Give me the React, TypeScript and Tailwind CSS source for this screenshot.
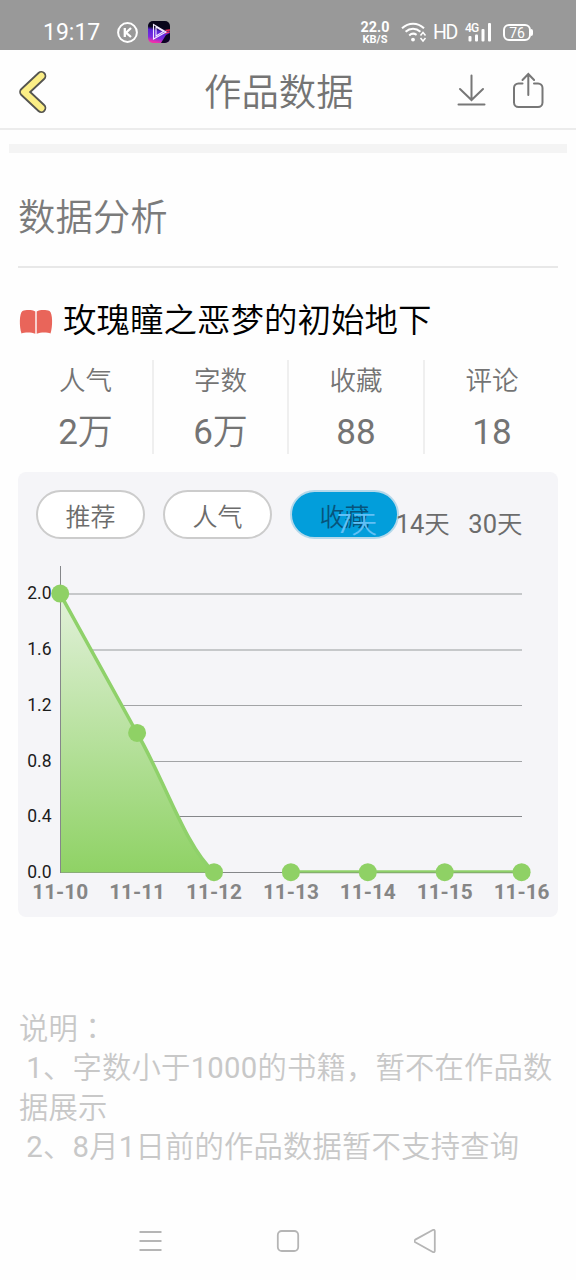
import type { ReactNode } from "react"

const stats = [
    { label: "人气", value: "2万" },
    { label: "字数", value: "6万" },
    { label: "收藏", value: "88" },
    { label: "评论", value: "18" },
]

const points = [
    { day: "11-10", value: 2 },
    { day: "11-11", value: 1 },
    { day: "11-12", value: 0 },
    { day: "11-13", value: 0 },
    { day: "11-14", value: 0 },
    { day: "11-15", value: 0 },
    { day: "11-16", value: 0 },
]

// y is relative to the chart svg
const gridLines = [
    { label: "2.0", y: 44, color: "#c6c8ca", width: 2 },
    { label: "1.6", y: 100, color: "#c6c8ca", width: 2 },
    { label: "1.2", y: 155.5, color: "#a2a4a6", width: 1 },
    { label: "0.8", y: 211.5, color: "#a2a4a6", width: 1 },
    { label: "0.4", y: 266.5, color: "#85878a", width: 1 },
    { label: "0.0", y: 322.5, color: "#85878a", width: 1 },
]

// digits stay at normal weight, the Chinese text around them is lighter
function Mixed({ text }: { text: string }) {
    return (
        <>
            {text.split(/(\d+)/).map((part, i) =>
                i % 2 ? (
                    <span key={i} className="font-normal">
                        {part}
                    </span>
                ) : (
                    part
                )
            )}
        </>
    )
}

function StatusBar() {
    return (
        <div className="flex h-[50px] items-start bg-[#999999] text-white">
            <div className="ml-[43px] mt-[18px] w-[74px] text-[23px] leading-[30px]">19:17</div>
            <svg className="mt-[22px] h-[22px] w-[22px]" viewBox="0 0 22 22" fill="none" stroke="white">
                <circle cx="10.5" cy="10.5" r="9.4" strokeWidth="2" />
                <path d="M7.8 6v9M14 6l-5 4.7 5 4.3" strokeWidth="2.3" />
            </svg>
            <svg className="ml-[9px] mt-[21px] h-[22px] w-[22px]" viewBox="0 0 22 22">
                <defs>
                    <linearGradient id="app" x1="0.2" y1="0" x2="0" y2="1">
                        <stop offset="0.25" stopColor="#08051a" />
                        <stop offset="0.4" stopColor="#5a24d8" />
                        <stop offset="0.7" stopColor="#7a2be0" />
                        <stop offset="0.9" stopColor="#f030ac" />
                    </linearGradient>
                </defs>
                <rect width="22" height="22" rx="5" fill="url(#app)" />
                <path d="M18 14l4-2v5a5 5 0 0 1-5 5h-4z" fill="#0c0524" />
                <path d="M17.500 9.500l4.500-.5M17 12l4.500-1" stroke="#f0305f" strokeWidth="1.600" />
                <path d="M5.500 3.500v14.500l12.500-7zM8 6v9l7.500-4.500z" fill="none" stroke="#f2eaff" strokeWidth="1.1" />
            </svg>
            <div className="ml-[190px] mt-[21px] w-[30px] text-center font-bold">
                <div className="h-[13px] text-[14.3px] leading-[13px]">22.0</div>
                <div className="h-[11px] text-[11px] leading-[12px]">KB/S</div>
            </div>
            <svg className="ml-[11px] mt-[22px] h-[22px] w-[26px]" viewBox="0 0 26 22" fill="none" stroke="white" strokeWidth="2">
                <path d="M1 6.200c6.600-6 15.600-6 22 0M4.600 9.800c4.400-4 10.400-4 14.800 0M8.200 13.400c2.200-2 5-2.200 7.400-.6" />
                <circle cx="12" cy="17.600" r="1.900" fill="white" stroke="none" />
                <path d="M19.500 13.500l2.500-3 2.500 3M19.500 16l2.500 3 2.500-3" strokeWidth="1.500" />
            </svg>
            <div className="ml-[6px] mt-[22px] w-[32px] text-[19.5px] leading-[22px] tracking-[-1.5px]">HD</div>
            <div className="relative h-[50px] w-[30px]">
                <span className="absolute left-0 top-[22px] text-[12px] font-medium leading-[12px] tracking-[-0.7px]">4G</span>
                <svg className="mt-[22px] h-[20px] w-[30px]" viewBox="0 0 30 20" fill="white">
                    <rect x="3.500" y="14" width="3" height="5.500" rx="1" />
                    <rect x="10" y="12.500" width="3" height="7" rx="1" />
                    <rect x="16.500" y="7" width="3" height="12.500" rx="1" />
                    <rect x="23" y="1" width="3" height="18.500" rx="1" />
                </svg>
            </div>
            <div className="ml-[8px] mt-[24px] h-[17px] w-[28px] rounded-[6px] border-2 border-white text-center text-[14px] leading-[14px]">
                76
            </div>
            <div className="mt-[29px] h-[7px] w-[2px] rounded-r bg-white" />
        </div>
    )
}

function Header() {
    return (
        <div className="flex h-[80px] items-center border-b-2 border-[#ececec]">
            <svg className="ml-[17px] mt-[5px] h-[46px] w-[34px]" viewBox="0 0 34 46" fill="none" strokeLinecap="round" strokeLinejoin="round">
                <path d="M24.300 7L7.200 23 24.300 39" stroke="#555550" strokeWidth="10" />
                <path d="M24.300 7L7.200 23 24.300 39" stroke="#fbee86" strokeWidth="6.400" />
            </svg>
            <h1 className="ml-[153px] mt-[8px] w-[152px] text-[37.4px] font-[350] leading-[54px] text-[#747474]">作品数据</h1>
            <svg className="ml-[101px] mt-[3px] h-[36px] w-[30px]" viewBox="0 0 30 36" fill="none" stroke="#777777" strokeWidth="2" strokeLinecap="round">
                <path d="M14.500 2.500v24M3 16l11.500 11L26 16M1.500 31.500h26" />
            </svg>
            <svg className="ml-[25px] mt-[3px] h-[40px] w-[32px]" viewBox="0 0 32 40" fill="none" stroke="#777777" strokeWidth="2" strokeLinecap="round">
                <path d="M10.500 12.500H6.500a4.500 4.500 0 0 0-4.500 4.500v14.500a4.500 4.500 0 0 0 4.500 4.500h19.500a4.500 4.500 0 0 0 4.500-4.500V17a4.500 4.500 0 0 0-4.500-4.500H22M16.300 24V3.500M10.500 9l5.800-6 5.800 6" />
            </svg>
        </div>
    )
}

function Pill({ children, active }: { children: ReactNode; active?: boolean }) {
    return (
        <div
            className={
                active
                    ? "flex h-[49px] w-[109px] items-center justify-center rounded-full border-2 border-[#b5d8ea] bg-[#029edb] pt-[6px] text-[25px] font-[350] text-[#07547b]"
                    : "flex h-[49px] w-[109px] items-center justify-center rounded-full border-2 border-[#cccccc] bg-white pt-[6px] text-[25px] font-[350] text-[#6c6c6c]"
            }
        >
            {children}
        </div>
    )
}

function TrendChart() {
    const x = (i: number) => 42.2 + i * 76.9
    const y = (v: number) => 322.2 - v * 139.3

    return (
        <svg className="block h-[367px] w-[540px]" viewBox="0 0 540 367">
            <defs>
                <linearGradient id="area" x1="0" y1="0" x2="0" y2="1">
                    <stop offset="0" stopColor="#e2f1da" />
                    <stop offset="1" stopColor="#8fd265" />
                </linearGradient>
            </defs>
            {gridLines.map((line) => (
                <g key={line.label}>
                    <path d={`M42 ${line.y}H504`} stroke={line.color} strokeWidth={line.width} />
                    <text x="33.5" y={line.y + 5} textAnchor="end" fontSize="17.5" fill="#1c1c1c">
                        {line.label}
                    </text>
                </g>
            ))}
            <path d="M42 43.700L119 183C146 229 168 298 196 322.500H42Z" fill="url(#area)" />
            <path d="M42.500 16V323" stroke="#85878a" />
            <path d="M42 43.700L119 183C146 229 168 298 196 322" fill="none" stroke="#8fd16a" strokeWidth="3.500" />
            <path d="M273 321.500H504" stroke="#8fd16a" strokeWidth="2.500" />
            <path d="M273 322.800H504" stroke="#7da56a" strokeWidth="0.8" />
            {points.map((p, i) => (
                <g key={p.day}>
                    <circle cx={x(i)} cy={y(p.value)} r="9" fill="#8fd165" />
                    <text x={x(i)} y="349" textAnchor="middle" fontSize="20.8" fontWeight="700" fill="#868686">
                        {p.day}
                    </text>
                </g>
            ))}
        </svg>
    )
}

export default function App() {
    return (
        <div className="flex h-[1280px] w-[576px] flex-col overflow-hidden bg-[#fefefe] font-['Roboto','Noto_Sans_CJK_SC',sans-serif]">
            <StatusBar />
            <Header />
            <div className="mx-[9px] mt-[14px] h-[9px] shrink-0 bg-[#f4f4f4]" />

            <main className="mx-[18px] flex flex-col">
                <h2 className="mt-[37px] h-[76px] text-[37.4px] font-[350] leading-[56px] text-[#7b7b7b]">数据分析</h2>
                <div className="h-[2px] bg-[#e8e8e8]" />

                <div className="mt-[31px] flex h-[44px] items-center">
                    <svg className="ml-[1px] mt-[2px] h-[26px] w-[34px]" viewBox="0 0 34 26" fill="#e9655a">
                        <path d="M16.300 2.500C13 .6 7 .6 3.500 2C.2 4 .2 18 2.500 24.500c3-1.500 10-1.500 13.800.2zM17.700 2.500C21 .6 27 .6 30.500 2c3.300 2 3.300 16 1 22.500-3-1.500-10-1.500-13.800.2z" />
                    </svg>
                    <h3 className="ml-[10px] whitespace-nowrap text-[33.5px] font-[350] leading-[44px] text-black">玫瑰瞳之恶梦的初始地下</h3>
                </div>

                <div className="ml-px mt-[17px] grid h-[94px] grid-cols-[135px_135px_136px_134px] text-center text-[#747474]">
                    {stats.map((s) => (
                        <div key={s.label} className="border-r-2 border-[#efefef] last:border-0">
                            <div className="pt-[2px] text-[26.5px] font-[350] leading-[38px]">{s.label}</div>
                            <div className="mt-[7px] h-[47px] text-[35px] font-[350] leading-[52px]">
                                <Mixed text={s.value} />
                            </div>
                        </div>
                    ))}
                </div>

                <section className="relative mt-[18px] h-[445px] rounded-[8px] bg-[#f5f5f8]">
                    <div className="flex h-[78px] gap-[18px] pl-[18px] pt-[18px]">
                        <Pill>推荐</Pill>
                        <Pill>人气</Pill>
                        <Pill active>收藏</Pill>
                    </div>
                    {/* range switch sits over the last pill */}
                    <div className="absolute right-[35.5px] top-[33px] flex gap-[18.5px] whitespace-nowrap text-[25.5px] font-[350] leading-[38px] text-[#6c6c6c]">
                        <span className="text-[#62c0f5]">
                            <Mixed text="7天" />
                        </span>
                        <span>
                            <Mixed text="14天" />
                        </span>
                        <span>
                            <Mixed text="30天" />
                        </span>
                    </div>
                    <TrendChart />
                </section>

                <div className="ml-[1px] mt-[93px] grid auto-rows-[39.3px] whitespace-pre text-[29.3px] font-[350] leading-[39.3px] tracking-[0.22px] text-[#c8c8c8]">
                    <p>
                        说明<span className="font-['Noto_Sans_CJK_TC',sans-serif] leading-none" lang="zh-TW">：</span>
                    </p>
                    <p>
                        <Mixed text=" 1、字数小于1000的书籍，暂不在作品数" />
                    </p>
                    <p>据展示</p>
                    <p>
                        <Mixed text=" 2、8月1日前的作品数据暂不支持查询" />
                    </p>
                </div>
            </main>

            <nav className="mt-auto flex h-[78px] items-center justify-center gap-[114px]">
                <svg className="h-[24px] w-[24px]" viewBox="0 0 24 24" fill="none" stroke="#b5b5b5" strokeWidth="1.8">
                    <path d="M1.500 3h22M1.500 12h22M1.500 21h22" />
                </svg>
                <svg className="h-[24px] w-[24px]" viewBox="0 0 24 24" fill="none" stroke="#b5b5b5" strokeWidth="1.8">
                    <rect x="1.800" y="2" width="20.400" height="20" rx="4" />
                </svg>
                <svg className="h-[24px] w-[24px]" viewBox="0 0 24 24" fill="none" stroke="#b5b5b5" strokeWidth="1.8" strokeLinejoin="round">
                    <path d="M1.300 10.600L18.800 1q2-.8 2 1.200v19.600q0 2-2 1.200L1.300 13.200q-1.600-1.200 0-2.600z" />
                </svg>
            </nav>
        </div>
    )
}
